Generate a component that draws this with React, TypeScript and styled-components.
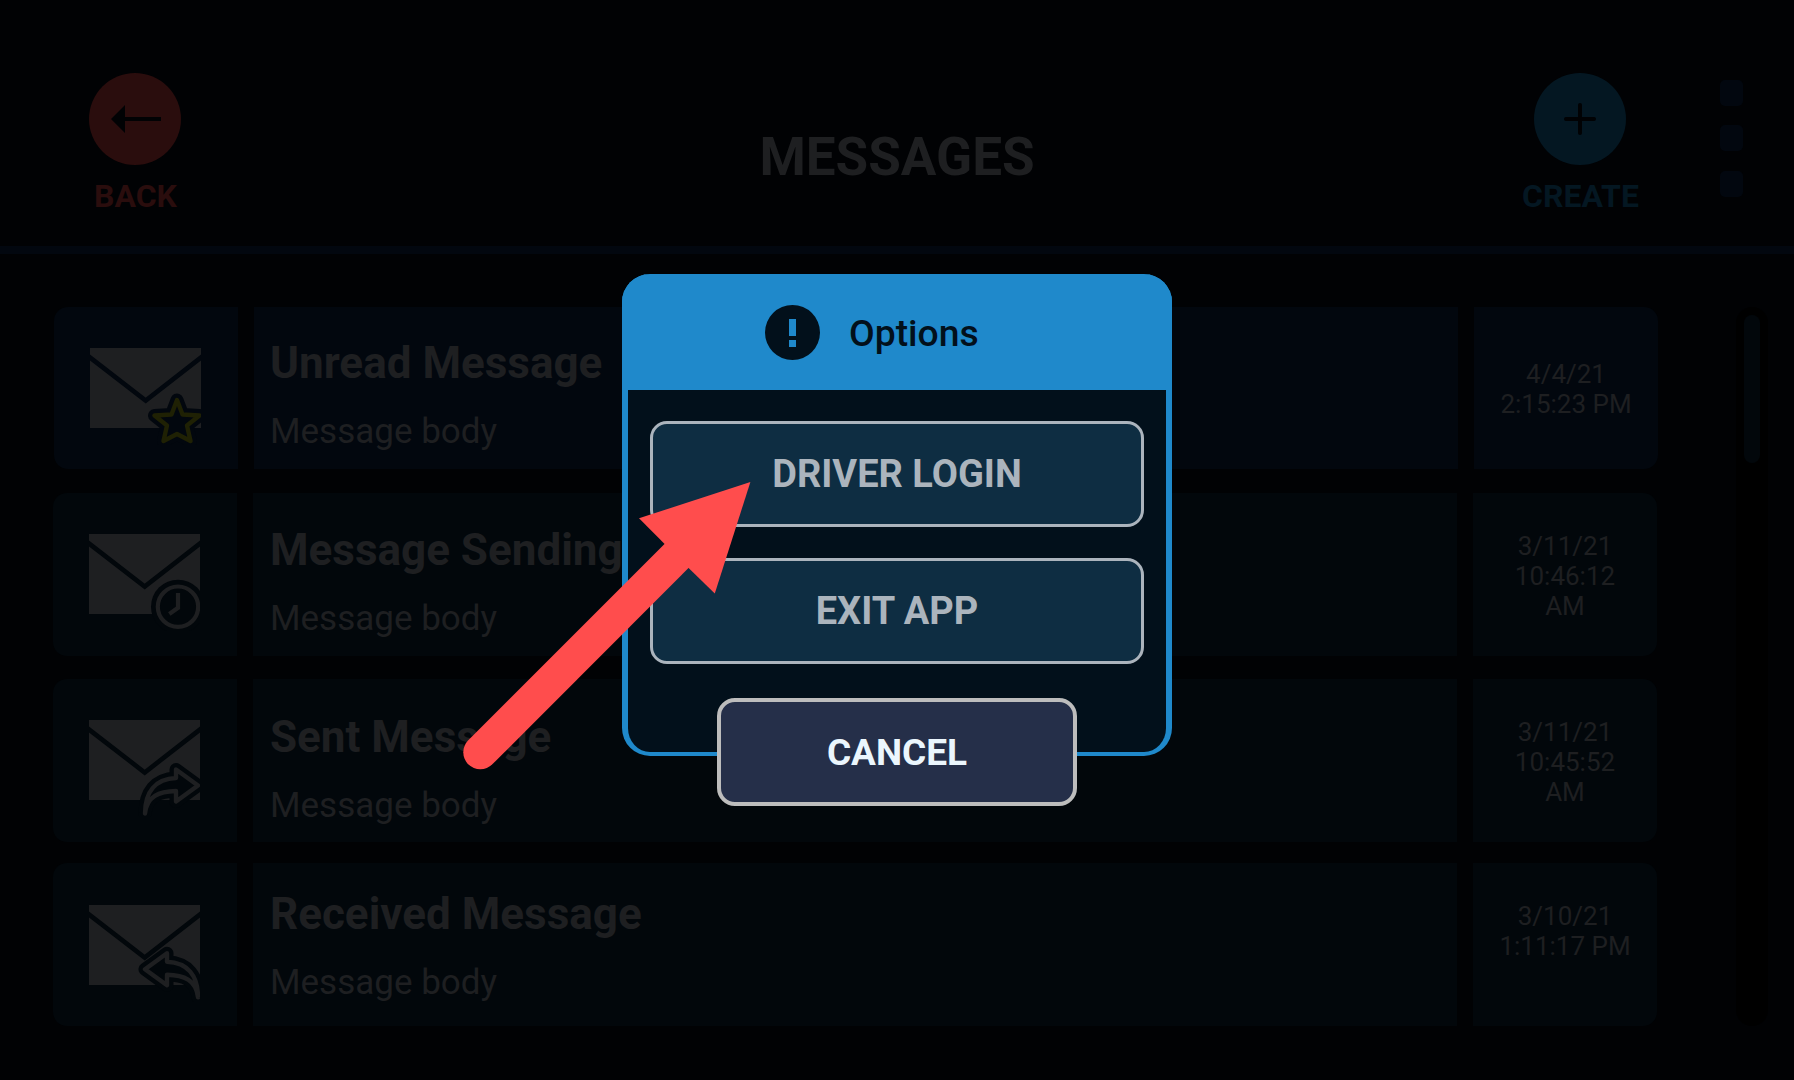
import React, { useState } from "react";
import styled, { createGlobalStyle } from "styled-components";

const GlobalStyle = createGlobalStyle`
  body {
    margin: 0;
    background-color: #010204;
    font-family: Roboto, "Liberation Sans", sans-serif;
    overflow: hidden;
  }
`;

const Screen = styled.div`
  position: relative;
  display: flex;
  flex-direction: column;
  width: 1794px;
  height: 1080px;
  overflow: hidden;
  background-color: #010204;
`;

const Header = styled.header`
  display: grid;
  grid-template-columns: 270px 1254px 112px 158px;
  height: 246px;
  border-bottom: 8px solid #02070f;
`;

const HeaderAction = styled.button<{ $color: string }>`
  display: flex;
  flex-direction: column;
  align-items: center;
  justify-self: center;
  width: 160px;
  margin: 0;
  padding: 73px 0 0;
  border: none;
  background: none;
  color: ${({ $color }) => $color};
  font-family: inherit;
  font-size: 32px;
  font-weight: 700;
  line-height: 38px;
  cursor: pointer;
`;

const ActionLabel = styled.span`
  padding-left: 1px;
`;

const RoundIcon = styled.svg`
  display: block;
  width: 92px;
  height: 92px;
  margin-bottom: 12px;
`;

const Title = styled.h1`
  margin: 0;
  padding-top: 125px;
  color: #1e1f21;
  font-size: 53px;
  font-weight: 700;
  line-height: 64px;
  text-align: center;
`;

const MoreButton = styled.button`
  display: flex;
  flex-direction: column;
  gap: 19.3px;
  margin: 0;
  padding: 80px 0 0 84px;
  border: none;
  background: none;
`;

const MoreDot = styled.span`
  width: 23px;
  height: 26px;
  border-radius: 5px;
  background-color: #02070f;
`;

const Content = styled.main`
  display: flex;
  justify-content: space-between;
  padding: 53px 26px 0 53px;
`;

const MessageList = styled.div`
  display: flex;
  flex-direction: column;
`;

const MessageRow = styled.div<{ $unread?: boolean; $gap: number }>`
  display: grid;
  grid-template-columns: 184px 1204px 184px;
  gap: 16px;
  height: ${({ $unread }) => ($unread ? 162 : 163)}px;
  margin-left: ${({ $unread }) => ($unread ? 1 : 0)}px;
  margin-bottom: ${({ $gap }) => $gap}px;
  --row-bg: ${({ $unread }) => ($unread ? "#02070e" : "#02070b")};
`;

const IconCell = styled.div<{ $top: number }>`
  padding: ${({ $top }) => $top}px 0 0 36px;
  border-radius: 14px 0 0 14px;
  background-color: var(--row-bg);
`;

const TextCell = styled.div<{ $top: number; $unread?: boolean }>`
  padding: ${({ $top }) => $top}px 0 0 ${({ $unread }) => ($unread ? 16 : 17)}px;
  background-color: var(--row-bg);
  color: #1e1f21;
`;

const DateCell = styled.div<{ $raise: number }>`
  display: flex;
  align-items: center;
  justify-content: center;
  box-sizing: border-box;
  padding: 2px 24px ${({ $raise }) => $raise}px;
  border-radius: 0 14px 14px 0;
  background-color: var(--row-bg);
  color: #1e1f21;
  font-size: 26px;
  line-height: 30px;
  text-align: center;
`;

const MessageTitle = styled.h2`
  margin: 0;
  font-size: 44px;
  font-weight: 700;
  line-height: 54px;
`;

const MessageBody = styled.p`
  margin: 21px 0 0;
  font-size: 35px;
  line-height: 42px;
`;

const MailSvg = styled.svg`
  display: block;
  width: 111px;
  height: 97px;
`;

const ScrollTrack = styled.div`
  box-sizing: border-box;
  width: 32px;
  height: 719px;
  padding: 8px;
  border-radius: 16px;
  background-color: #000000;
`;

const ScrollThumb = styled.div`
  height: 148px;
  border-radius: 8px;
  background-color: #02070b;
`;

const Overlay = styled.div`
  position: absolute;
  inset: 0;
  display: flex;
  align-items: flex-start;
  justify-content: center;
  padding-top: 274px;
`;

const Dialog = styled.section`
  display: flex;
  flex-direction: column;
  align-items: center;
  box-sizing: border-box;
  width: 550px;
  height: 482px;
  border: 6px solid #1f89cb;
  border-top: none;
  border-bottom-width: 4px;
  border-radius: 28px;
  background-color: #02101b;
`;

const DialogHeader = styled.div`
  display: flex;
  align-items: center;
  align-self: stretch;
  gap: 29px;
  height: 116px;
  flex: none;
  box-sizing: border-box;
  margin: 0 -6px 31px;
  padding: 0 0 0 143px;
  border-radius: 28px 28px 0 0;
  background-color: #1f89cb;
  color: #02101b;
`;

const DialogTitle = styled.span`
  padding-top: 2px;
  font-size: 37.3px;
  font-weight: 500;
`;

const AlertIcon = styled.svg`
  width: 55px;
  height: 55px;
`;

const OptionButton = styled.button`
  flex: none;
  width: 494px;
  height: 106px;
  margin: 0 0 31px;
  padding: 0;
  border: 3px solid #abb4bd;
  border-radius: 17px;
  background-color: #0e2d42;
  color: #abb4bd;
  font-family: inherit;
  font-size: 38px;
  font-weight: 700;
  cursor: pointer;
`;

const CancelButton = styled(OptionButton)`
  width: 360px;
  height: 108px;
  margin: 3px 0 0;
  border: 4px solid #bdbdbd;
  border-radius: 18px;
  background-color: #252f49;
  color: #ebf6fd;
  font-size: 37px;
`;

const PointerArrow = styled.svg`
  position: absolute;
  left: 0;
  top: 0;
  pointer-events: none;
`;

type Status = "unread" | "sending" | "sent" | "received";

interface Message {
  status: Status;
  title: string;
  date: string;
  time: string;
  iconTop: number;
  textTop: number;
  raise: number;
  gap: number;
}

const messages: Message[] = [
  { status: "unread", title: "Unread Message", date: "4/4/21", time: "2:15:23 PM", iconTop: 41, textTop: 29, raise: 0, gap: 24 },
  { status: "sending", title: "Message Sending", date: "3/11/21", time: "10:46:12 AM", iconTop: 41, textTop: 30, raise: 0, gap: 23 },
  { status: "sent", title: "Sent Message", date: "3/11/21", time: "10:45:52 AM", iconTop: 41, textTop: 31, raise: 0, gap: 21 },
  { status: "received", title: "Received Message", date: "3/10/21", time: "1:11:17 PM", iconTop: 42, textTop: 24, raise: 30, gap: 0 },
];

const STAR = "M87 52 L92.5 66.5 L109.5 67.5 L97 77.5 L100.5 93 L87 86 L73.5 93 L77 77.5 L64.5 67.5 L81.5 66.5 Z";
const FORWARD = "M56 93.5 C56 72 66 59 87 58 V49.5 L109 65.5 L87 81.5 V71 C70 71.5 58 76 56 93.5 Z";

// Badge in the corner of the envelope, with a gap in the row colour round it
const Badge: React.FC<{ status: Status }> = ({ status }) => {
  if (status === "sending") {
    return (
      <g fill="none" stroke="#1e1f21" strokeWidth="4.2">
        <circle cx="89" cy="72.7" r="27" fill="var(--row-bg)" stroke="none" />
        <circle cx="89" cy="72.7" r="20.2" />
        <path d="M89 59 V73.8 L80.3 80" />
      </g>
    );
  }
  const shape = status === "unread" ? STAR : FORWARD;
  const color = status === "unread" ? "#1f2104" : "#1e1f21";
  return (
    <g
      transform={status === "received" ? "translate(165 -1.2) scale(-1 1)" : undefined}
      fill="var(--row-bg)"
      strokeLinejoin="round"
    >
      <path d={shape} stroke="var(--row-bg)" strokeWidth="13" />
      <path d={shape} stroke={color} strokeWidth="4.4" />
    </g>
  );
};

const MailIcon: React.FC<{ status: Status }> = ({ status }) => (
  <MailSvg viewBox="0 0 111 97">
    <rect width="111" height="80" fill="#1e1f21" />
    <path d="M-4 6.4 L55.7 52.5 L115 6.4" fill="none" stroke="var(--row-bg)" strokeWidth="4.6" />
    <Badge status={status} />
  </MailSvg>
);

const App: React.FC = () => {
  const [showOptions, setShowOptions] = useState(true);

  return (
    <>
      <GlobalStyle />
      <Screen>
        <Header>
          <HeaderAction $color="#2a0d0d">
            <RoundIcon viewBox="0 0 92 92">
              <circle cx="46" cy="46" r="46" fill="currentColor" />
              <path d="M22 46 L36 32 V44 H72 V48 H36 V60 Z" fill="#010204" />
            </RoundIcon>
            <ActionLabel>BACK</ActionLabel>
          </HeaderAction>
          <Title>MESSAGES</Title>
          <HeaderAction $color="#041722">
            <RoundIcon viewBox="0 0 92 92">
              <circle cx="46" cy="46" r="46" fill="currentColor" />
              <path d="M32 46 H60 M46 32 V60" stroke="#010204" strokeWidth="4" strokeLinecap="round" />
            </RoundIcon>
            <ActionLabel>CREATE</ActionLabel>
          </HeaderAction>
          <MoreButton onClick={() => setShowOptions(true)}>
            <MoreDot />
            <MoreDot />
            <MoreDot />
          </MoreButton>
        </Header>

        <Content>
          <MessageList>
            {messages.map((message) => (
              <MessageRow key={message.title} $unread={message.status === "unread"} $gap={message.gap}>
                <IconCell $top={message.iconTop}>
                  <MailIcon status={message.status} />
                </IconCell>
                <TextCell $top={message.textTop} $unread={message.status === "unread"}>
                  <MessageTitle>{message.title}</MessageTitle>
                  <MessageBody>Message body</MessageBody>
                </TextCell>
                <DateCell $raise={message.raise}>
                  {message.date} {message.time}
                </DateCell>
              </MessageRow>
            ))}
          </MessageList>
          <ScrollTrack>
            <ScrollThumb />
          </ScrollTrack>
        </Content>

        {showOptions && (
          <Overlay>
            <Dialog>
              <DialogHeader>
                <AlertIcon viewBox="0 0 55 55">
                  <circle cx="27.5" cy="27.5" r="27.5" fill="#02101b" />
                  <path d="M24 14 H31 V31 H24 Z M24 35 H31 V42 H24 Z" fill="#1f89cb" />
                </AlertIcon>
                <DialogTitle>Options</DialogTitle>
              </DialogHeader>
              <OptionButton>DRIVER LOGIN</OptionButton>
              <OptionButton>EXIT APP</OptionButton>
              <CancelButton onClick={() => setShowOptions(false)}>CANCEL</CancelButton>
            </Dialog>
          </Overlay>
        )}

        <PointerArrow width="1794" height="1080" viewBox="0 0 1794 1080">
          <path d="M480.3 752.3 L680 552.6" stroke="#ff4d4d" strokeWidth="34" strokeLinecap="round" />
          <path d="M750.4 482 L639 518.3 L664.4 543.8 L688.6 568 L714.8 593.4 Z" fill="#ff4d4d" />
        </PointerArrow>
      </Screen>
    </>
  );
};

export default App;
